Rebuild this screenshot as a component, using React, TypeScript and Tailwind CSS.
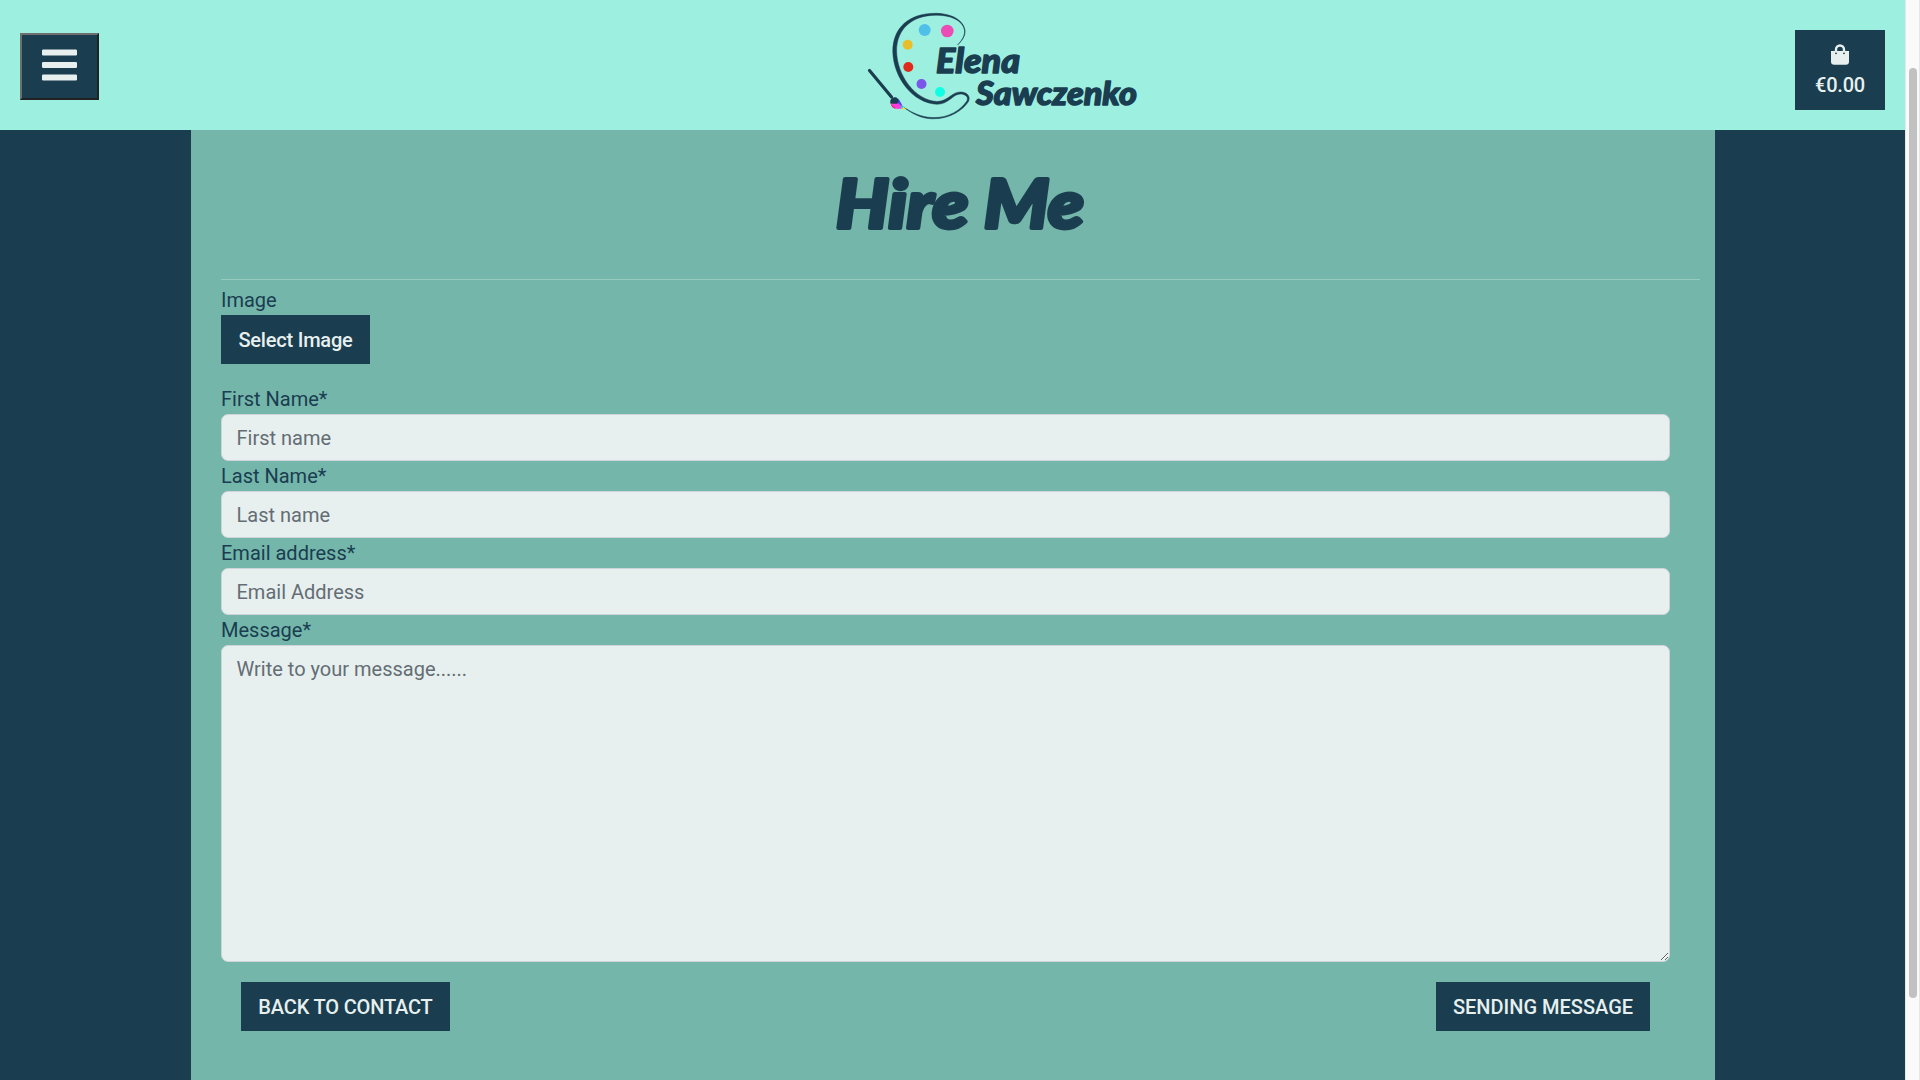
import React from "react";

const display = '"Lato", sans-serif';

function Word({ x, y, size, length, stroke, children }: { x: number; y: number; size: number; length: number; stroke: number; children: string }) {
  return (
    <text
      x={x}
      y={y}
      fontFamily={display}
      fontWeight={900}
      fontStyle="italic"
      fontSize={size}
      textLength={length}
      lengthAdjust="spacingAndGlyphs"
      fill="#1a3d50"
      stroke="#1a3d50"
      strokeWidth={stroke}
      strokeLinejoin="round"
    >
      {children}
    </text>
  );
}

function Logo() {
  return (
    <svg width="300" height="130" viewBox="0 0 300 130" aria-label="Elena Sawczenko">
      <path
        d="M107.5 45C114 39 115.500 34 115 30C113 19 100 13.500 86 13.300C60 13 42.500 27 42.800 52C43.500 77 62 103 87 104.300C99 104.300 103 93.500 111 94C116.500 94.500 119 98 116.500 101.500C111 109.500 99 118.500 82 117.500C71 117.200 62 112.500 54 107.500C62 113.500 71 118.500 82 118.800C100 119.300 113 110 118.500 101.500C121 96 116.500 92 111 92C102 91.500 98 101.500 87 101.500C65 100.500 46.800 75 46.600 51C46.500 29 62 15.200 86 15.200C100 15 112.500 20 114.500 30C115 34 113.500 39 107.500 45Z"
        fill="#1a3d50"
        stroke="#1a3d50"
        strokeWidth="0.5"
      />
      <circle cx="74.700" cy="30" r="6" fill="#4fc1e9" />
      <circle cx="97.300" cy="31" r="6.300" fill="#ec4ab4" />
      <circle cx="57.700" cy="44.700" r="5" fill="#e8bf2b" />
      <circle cx="58.300" cy="67" r="5" fill="#df2b1c" />
      <circle cx="71.500" cy="84" r="5" fill="#7c56e8" />
      <circle cx="90" cy="92" r="5" fill="#10ffe4" />
      <path d="M19.500 70.500L41.500 97" stroke="#1a3d50" strokeWidth="3.200" strokeLinecap="round" />
      <path d="M40.500 102C42 109 46 109.500 52 108.500L49 101Z" fill="#ff3cda" />
      <path d="M40.500 103C42 106 44 107 46 108.500C43 109 41 106 40.500 103Z" fill="#e91e63" />
      <path d="M48 98.500C50.500 101 51.500 104 53.500 108L48 103Z" fill="#5b3df5" />
      <path d="M51 105.500L54 106.500L53 109L51 108Z" fill="#18c9f5" />
      <path d="M53.500 107L56 109L51.500 109.500Z" fill="#ffe21f" />
      <path d="M40.300 100.500C41 98 44 96.500 46.500 97.500C49 99 49 102 47.500 103.500C45 104.500 42 103 40.300 103.500Z" fill="#1a3d50" />
      <Word x={86} y={73.300} size={33.5} length={84} stroke={1.4}>Elena</Word>
      <Word x={126} y={105.200} size={32} length={161} stroke={1.4}>Sawczenko</Word>
    </svg>
  );
}

function Field({ label, placeholder }: { label: string; placeholder: string }) {
  return (
    <label className="block">
      <span className="block">{label}</span>
      <input
        placeholder={placeholder}
        className="block h-[47px] w-full rounded-[7px] border border-[#ced4da] bg-[#e7f0ee] px-[14.5px] placeholder:text-[#646d75]"
      />
    </label>
  );
}

function Button({ className, children }: { className: string; children: string }) {
  return (
    <button className={`h-[49px] bg-[#1a3d50] text-center font-medium whitespace-nowrap text-[#e7f0ee] ${className}`}>
      {children}
    </button>
  );
}

export default function App() {
  return (
    <div className="flex h-[1080px] w-[1920px] overflow-hidden bg-[#1a3d50] font-['Roboto',sans-serif] text-[20px] leading-[30px] text-[#1a3d50]">
      <div className="flex w-[1905px] flex-col">
        <header className="flex h-[130px] shrink-0 items-start bg-[#9df0e0]">
          <button
            aria-label="Menu"
            className="mt-[33px] ml-5 flex h-[67px] w-[79px] items-start justify-center border-2 border-t-[#6f6f6f] border-r-[#222] border-b-[#222] border-l-[#6f6f6f] bg-[#1a3d50] pt-[14px]"
          >
            <svg width="35" height="32" viewBox="0 0 35 32" fill="#e7f0ee">
              <rect y="0.400" width="35" height="6" rx="1.200" />
              <rect y="12.900" width="35" height="6" rx="1.200" />
              <rect y="25.400" width="35" height="6" rx="1.200" />
            </svg>
          </button>
          <div className="ml-[751px]">
            <Logo />
          </div>
          <div className="mt-[30px] mr-5 ml-auto flex h-20 w-[90px] flex-col items-center bg-[#1a3d50] pt-[14px] font-medium text-[#e7f0ee]">
            <svg width="18" height="21" viewBox="0 0 18 21">
              <path d="M5 8V5.500a4 4 0 0 1 8 0V8" fill="none" stroke="#e7f0ee" strokeWidth="2.400" />
              <path d="M0 7H18V17.500a3.200 3.200 0 0 1-3.200 3.200H3.200A3.200 3.200 0 0 1 0 17.500Z" fill="#e7f0ee" />
              <circle cx="5" cy="9.300" r="0.900" fill="#1a3d50" />
              <circle cx="13" cy="9.300" r="0.900" fill="#1a3d50" />
            </svg>
            <span className="mt-[5px] tracking-[-0.01em]">€0.00</span>
          </div>
        </header>
        <main className="ml-[191px] w-[1524px] grow bg-[#74b6aa] pl-[30px]">
          <h1 aria-label="Hire Me" className="h-[149px]">
            <svg width="1478" height="149" viewBox="0 0 1478 149">
              <Word x={615} y={97.500} size={67} length={248} stroke={4}>Hire Me</Word>
            </svg>
          </h1>
          <hr className="w-[1479px] border-[#96cbc0]" />
          <form className="w-[1449px] pt-[5px]">
            <div>Image</div>
            <Button className="w-[149px] tracking-[-0.01em]">Select Image</Button>
            <div className="mt-5">
              <Field label="First Name*" placeholder="First name" />
              <Field label="Last Name*" placeholder="Last name" />
              <Field label="Email address*" placeholder="Email Address" />
              <label className="block">
                <span className="block">Message*</span>
                <textarea
                  placeholder="Write to your message......"
                  className="block h-[317px] w-full resize rounded-[7px] border border-[#ced4da] bg-[#e7f0ee] px-[14.5px] py-[7.5px] placeholder:text-[#646d75]"
                />
              </label>
            </div>
            <div className="mt-5 flex justify-between px-5">
              <Button className="w-[209px] tracking-[-0.008em]">BACK TO CONTACT</Button>
              <Button className="w-[214px]">SENDING MESSAGE</Button>
            </div>
          </form>
        </main>
      </div>
      <div className="w-[15px] border-x border-[#e6e6e6] bg-[#fafafa] pt-[68px] pl-[3px]">
        <div className="h-[930px] w-2 rounded-full bg-[#c1c1c1]" />
      </div>
    </div>
  );
}
